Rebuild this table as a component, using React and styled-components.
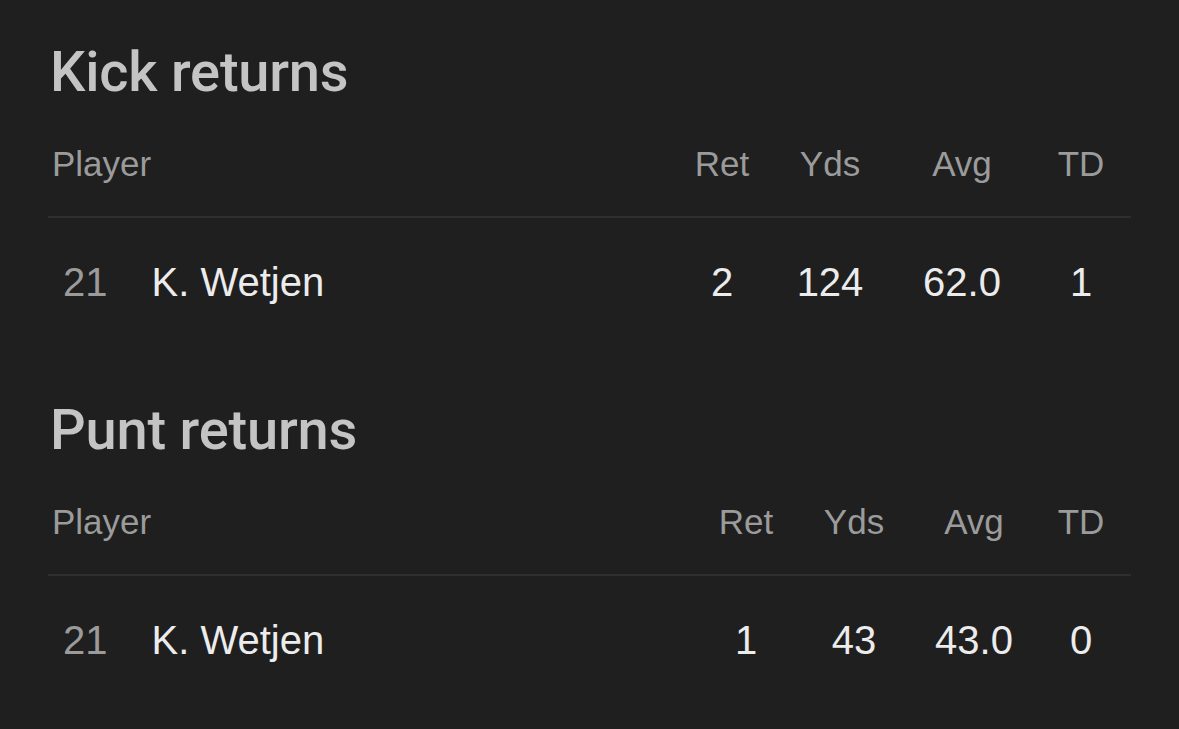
import React from 'react';
import styled, { createGlobalStyle } from 'styled-components';

const GlobalStyle = createGlobalStyle`
  html, body {
    margin: 0;
    padding: 0;
    background: #1f1f1f;
  }
`;

const Page = styled.div`
  width: 1179px;
  min-height: 729px;
  box-sizing: border-box;
  padding: 39px 48px 0 48px;
  background: #1f1f1f;
  font-family: 'Liberation Sans', Arial, sans-serif;
`;

const Section = styled.section`
  width: 1083px;
  margin-bottom: 91px;
`;

const Title = styled.h2`
  margin: 0 0 38px 2px;
  font-family: Roboto, 'Open Sans', sans-serif;
  font-weight: 500;
  font-size: 56px;
  line-height: 67px;
  color: #c4c4c4;
  letter-spacing: -0.2px;
`;

const Row = styled.div`
  display: grid;
  grid-template-columns: 1fr ${(p) => p.cols};
  align-items: center;
`;

const HeadRow = styled(Row)`
  padding-bottom: 32px;
  border-bottom: 2px solid #2e2e2e;
  font-size: 35px;
  line-height: 40px;
  color: #9b9b9b;
`;

const BodyRow = styled(Row)`
  padding-top: 40px;
  font-size: 40px;
  line-height: 48px;
  color: #ececec;
`;

const HeadLabel = styled.div`
  padding-left: 4px;
`;

const Cell = styled.div`
  text-align: center;
`;

const PlayerCell = styled.div`
  display: flex;
  align-items: baseline;
  padding-left: 15px;
  gap: 44px;
`;

const Number = styled.span`
  color: #9b9b9b;
`;

const tables = [
  {
    title: 'Kick returns',
    cols: '90px 126px 138px 100px',
    row: { num: '21', name: 'K. Wetjen', ret: '2', yds: '124', avg: '62.0', td: '1' },
  },
  {
    title: 'Punt returns',
    cols: '90px 126px 114px 100px',
    row: { num: '21', name: 'K. Wetjen', ret: '1', yds: '43', avg: '43.0', td: '0' },
  },
];

function StatTable({ title, cols, row }) {
  return (
    <Section>
      <Title>{title}</Title>
      <HeadRow cols={cols}>
        <HeadLabel>Player</HeadLabel>
        <Cell>Ret</Cell>
        <Cell>Yds</Cell>
        <Cell>Avg</Cell>
        <Cell>TD</Cell>
      </HeadRow>
      <BodyRow cols={cols}>
        <PlayerCell>
          <Number>{row.num}</Number>
          <span>{row.name}</span>
        </PlayerCell>
        <Cell>{row.ret}</Cell>
        <Cell>{row.yds}</Cell>
        <Cell>{row.avg}</Cell>
        <Cell>{row.td}</Cell>
      </BodyRow>
    </Section>
  );
}

export default function App() {
  return (
    <>
      <GlobalStyle />
      <Page>
        {tables.map((t) => (
          <StatTable key={t.title} {...t} />
        ))}
      </Page>
    </>
  );
}
